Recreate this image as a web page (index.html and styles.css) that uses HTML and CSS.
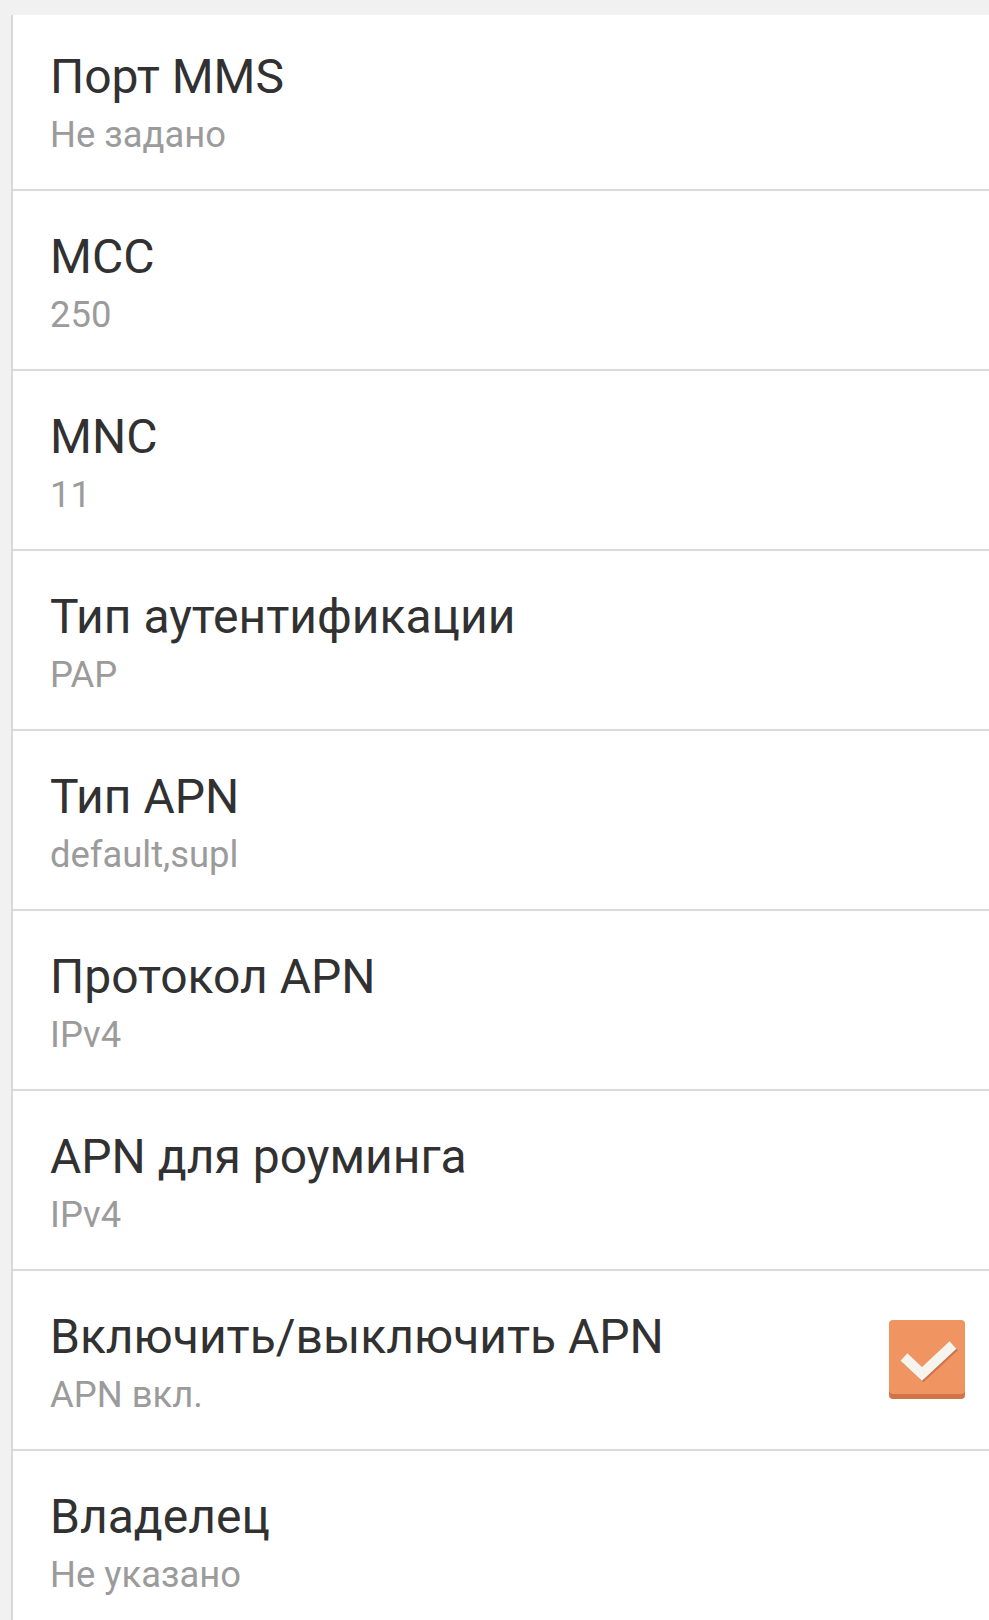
FILE: index.html
```html
<!DOCTYPE html>
<html lang="ru">
<head>
<meta charset="utf-8">
<title>APN</title>
<link rel="stylesheet" href="styles.css">
</head>
<body>
<div class="screen">
  <ul class="list">
    <li class="item first">
      <div class="text">
        <div class="title">Порт MMS</div>
        <div class="summary">Не задано</div>
      </div>
    </li>
    <li class="item">
      <div class="text">
        <div class="title">MCC</div>
        <div class="summary">250</div>
      </div>
    </li>
    <li class="item">
      <div class="text">
        <div class="title">MNC</div>
        <div class="summary">11</div>
      </div>
    </li>
    <li class="item">
      <div class="text">
        <div class="title">Тип аутентификации</div>
        <div class="summary">PAP</div>
      </div>
    </li>
    <li class="item">
      <div class="text">
        <div class="title">Тип APN</div>
        <div class="summary">default,supl</div>
      </div>
    </li>
    <li class="item">
      <div class="text">
        <div class="title">Протокол APN</div>
        <div class="summary">IPv4</div>
      </div>
    </li>
    <li class="item">
      <div class="text">
        <div class="title">APN для роуминга</div>
        <div class="summary">IPv4</div>
      </div>
    </li>
    <li class="item">
      <div class="text">
        <div class="title">Включить/выключить APN</div>
        <div class="summary">APN вкл.</div>
      </div>
      <div class="checkbox">
        <svg width="76" height="79" viewBox="0 0 76 79">
          <rect x="0" y="5" width="76" height="74" rx="4" fill="#d27448"/>
          <rect x="0" y="0" width="76" height="74" rx="4" fill="#f09462"/>
          <polyline points="15,37 33,54 64,25" fill="none" stroke="#c9744c" stroke-width="10" transform="translate(1.5,1.5)"/>
          <polyline points="15,37 33,54 64,25" fill="none" stroke="#f6f4ee" stroke-width="10"/>
        </svg>
      </div>
    </li>
    <li class="item">
      <div class="text">
        <div class="title">Владелец</div>
        <div class="summary">Не указано</div>
      </div>
    </li>
  </ul>
</div>
</body>
</html>
```

FILE: styles.css
```css
html, body {
  margin: 0;
  padding: 0;
  background: #f1f1f1;
}

.screen {
  width: 989px;
  height: 1620px;
  overflow: hidden;
  padding-top: 15px;
  box-sizing: border-box;
  font-family: Roboto, "Noto Sans", sans-serif;
}

.list {
  list-style: none;
  margin: 0 0 0 11px;
  padding: 0;
  background: #ffffff;
  border-left: 2px solid #d8d8d8;
}

.item {
  display: flex;
  align-items: flex-start;
  justify-content: space-between;
  height: 178px;
  box-sizing: content-box;
  border-bottom: 2px solid #dadada;
  padding-left: 37px;
  padding-right: 24px;
}

.item.first {
  height: 174px;
}

.text {
  padding-top: 38px;
}

.first .text {
  padding-top: 34px;
}

.title {
  font-size: 48px;
  line-height: 56px;
  color: #313131;
  white-space: nowrap;
}

.summary {
  font-size: 36.4px;
  line-height: 44px;
  margin-top: 8px;
  color: #9b9b9b;
  white-space: nowrap;
}

.checkbox {
  width: 76px;
  height: 79px;
  margin-top: 49px;
  flex: none;
}

.checkbox svg {
  display: block;
}
```
